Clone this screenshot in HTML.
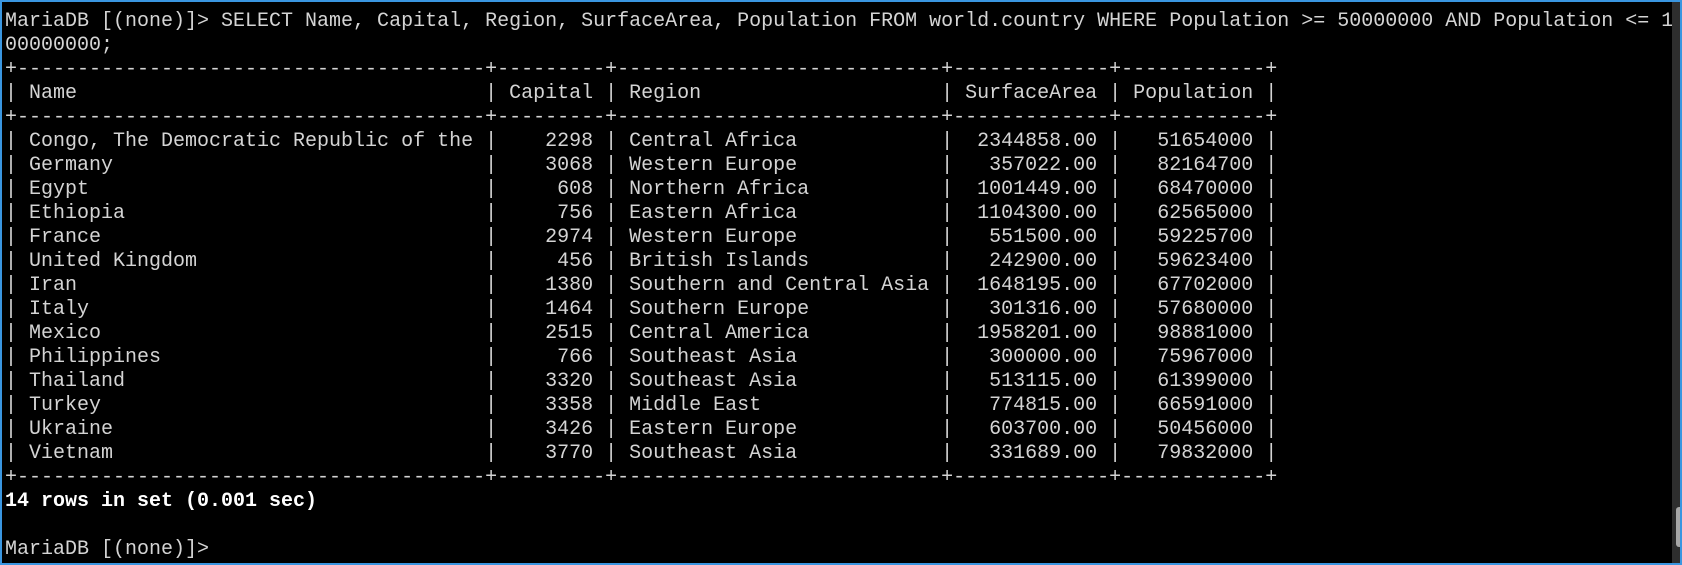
<!DOCTYPE html>
<html><head><meta charset="utf-8"><style>
html,body{margin:0;padding:0;background:#000;}
#w{position:relative;width:1682px;height:565px;box-sizing:border-box;border:2px solid #3a96e0;background:#000;overflow:hidden;}
pre{margin:0;position:absolute;left:3px;top:8px;font-family:"Liberation Mono","Courier New",monospace;font-size:20px;line-height:24px;color:#d4d4d4;white-space:pre;}
b{color:#fff;}
#sb{position:absolute;right:0;top:0;width:8px;height:561px;background:#2e2e2e;}
#th{position:absolute;right:0;top:505px;width:4px;height:40px;background:#a8a8a8;border-radius:3px 0 0 3px;}
</style></head><body><div id="w"><pre>MariaDB [(none)]&gt; SELECT Name, Capital, Region, SurfaceArea, Population FROM world.country WHERE Population &gt;= 50000000 AND Population &lt;= 1
00000000;
+---------------------------------------+---------+---------------------------+-------------+------------+
| Name                                  | Capital | Region                    | SurfaceArea | Population |
+---------------------------------------+---------+---------------------------+-------------+------------+
| Congo, The Democratic Republic of the |    2298 | Central Africa            |  2344858.00 |   51654000 |
| Germany                               |    3068 | Western Europe            |   357022.00 |   82164700 |
| Egypt                                 |     608 | Northern Africa           |  1001449.00 |   68470000 |
| Ethiopia                              |     756 | Eastern Africa            |  1104300.00 |   62565000 |
| France                                |    2974 | Western Europe            |   551500.00 |   59225700 |
| United Kingdom                        |     456 | British Islands           |   242900.00 |   59623400 |
| Iran                                  |    1380 | Southern and Central Asia |  1648195.00 |   67702000 |
| Italy                                 |    1464 | Southern Europe           |   301316.00 |   57680000 |
| Mexico                                |    2515 | Central America           |  1958201.00 |   98881000 |
| Philippines                           |     766 | Southeast Asia            |   300000.00 |   75967000 |
| Thailand                              |    3320 | Southeast Asia            |   513115.00 |   61399000 |
| Turkey                                |    3358 | Middle East               |   774815.00 |   66591000 |
| Ukraine                               |    3426 | Eastern Europe            |   603700.00 |   50456000 |
| Vietnam                               |    3770 | Southeast Asia            |   331689.00 |   79832000 |
+---------------------------------------+---------+---------------------------+-------------+------------+
<b>14 rows in set (0.001 sec)</b>

MariaDB [(none)]&gt;</pre><div id="sb"><div id="th"></div></div></div></body></html>
